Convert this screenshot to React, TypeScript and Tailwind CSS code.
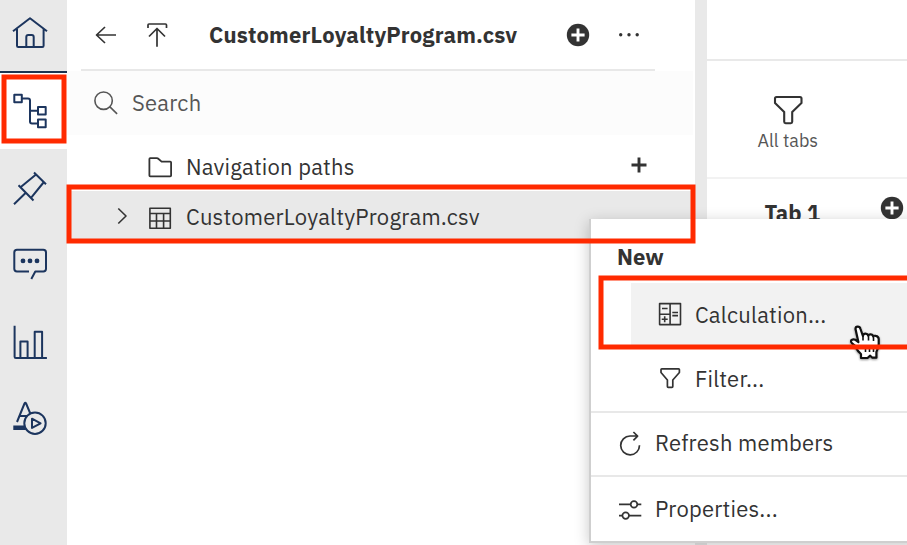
import type { ReactNode } from "react";

type IconProps = {
  box: string;
  w: number;
  h: number;
  stroke?: number;
  color?: string;
  className?: string;
  children: ReactNode;
};

function Icon({ box, w, h, stroke = 1.5, color = "#333333", className = "", children }: IconProps) {
  return (
    <svg
      viewBox={box}
      width={w}
      height={h}
      fill="none"
      stroke={color}
      strokeWidth={stroke}
      strokeLinejoin="round"
      className={`block shrink-0 ${className}`}
    >
      {children}
    </svg>
  );
}

const NAVY = "#1c355e";

function SideIcon({ top, children }: { top: number; children: ReactNode }) {
  return (
    <Icon box={`12 ${top} 36 36`} w={36} h={36} stroke={2} color={NAVY}>
      {children}
    </Icon>
  );
}

function Sidebar() {
  return (
    <nav className="flex w-[67px] shrink-0 flex-col bg-[#e9e9e9]">
      <div className="flex h-[73px] items-start border-b-2 border-[#1b3350] pt-[15px] pl-3">
        <SideIcon top={15}>
          <path d="M13 31.3 30 18.2 47 31.3M17 29v16.700q0 1.300 1.300 1.300h24q1.300 0 1.300-1.300V29M26.300 47V37q0-2 2-2h3.400q2 0 2 2v10" />
        </SideIcon>
      </div>
      <div className="flex h-[76px] items-center bg-white pl-3">
        <SideIcon top={93}>
          <path d="M14.300 94.700h7.500v7.600h-7.500zM38 107h7.700v7.600H38zM38 119.600h7.700v7.600H38zM22 98.400h6q2 0 2 2v21q0 2 2 2h6M30 110.800h8" />
        </SideIcon>
      </div>
      <div className="flex h-[77px] items-center pl-3">
        <SideIcon top={169.5}>
          <path d="m34 172 12 11.800M18.500 184.700l15 15.300M36 174l-15.500 12.800M43.500 182 31 197.300M25.800 192.300 14 203.800" />
        </SideIcon>
      </div>
      <div className="flex h-[77px] items-center pl-3">
        <SideIcon top={246.5}>
          <path d="M29 271H17q-2.700 0-2.700-2.700V252q0-2.700 2.700-2.700h26.300q2.700 0 2.700 2.700v16.300q0 2.700-2.700 2.700h-8l-4 7.500" />
          <g fill={NAVY} stroke="none">
            <circle cx="23" cy="260.400" r="2.400" />
            <circle cx="30" cy="260.400" r="2.400" />
            <circle cx="37" cy="260.400" r="2.400" />
          </g>
        </SideIcon>
      </div>
      <div className="flex h-[77px] items-center pl-3">
        <SideIcon top={323.5}>
          <path d="M14.600 325.300v31q0 1.300 1.300 1.300h31M20.400 357.300V341h7.200v16.300M34.700 357.300V331.300h7.400v26" />
        </SideIcon>
      </div>
      <div className="flex h-[77px] items-center pl-3">
        <SideIcon top={400.5}>
          <path d="m17 421.500 7.500-18.500q.8-1.500 1.600 0l4.200 10M20 415.500h7.500" />
          <path d="M13.300 425h11q.6 2.500 1.700 4.400H13.300z" fill={NAVY} stroke="none" />
          <circle cx="35" cy="422.700" r="10.700" />
          <path d="M32 418.200v9.200l8.600-4.600z" />
        </SideIcon>
      </div>
    </nav>
  );
}

function PlusCircle() {
  return (
    <svg viewBox="0 0 24 24" width={24} height={24} className="block shrink-0">
      <circle cx="12" cy="12" r="11.200" fill="#333333" />
      <path d="M12 5.400v13.200M5.400 12h13.200" stroke="#ffffff" strokeWidth="2.900" />
    </svg>
  );
}

function SourcesPanel() {
  return (
    <section className="flex w-[628px] shrink-0 flex-col bg-white text-[#333333]">
      <header className="ml-[14px] flex h-[71px] w-[574px] items-center border-b-2 border-[#e8e8e8] pl-[13px]">
        <Icon box="94 23 24 24" w={24} h={24} stroke={1.7}>
          <path d="M116 35H96.500M105 27l-8.500 8 8.500 8" />
        </Icon>
        <Icon box="145 23 24 24" w={24} h={24} stroke={1.7} className="ml-[27px]">
          <path d="M148 28v-3q0-1 1-1h16.500q1 0 1 1v3M157 46.800V28.500M149 36.500l8-8 8 8" />
        </Icon>
        <h1 className="ml-10 w-[308px] text-[22px] leading-7 font-bold tracking-[0.2px] whitespace-nowrap">
          CustomerLoyaltyProgram.csv
        </h1>
        <div className="ml-[49px]">
          <PlusCircle />
        </div>
        <Icon box="617 23 24 24" w={24} h={24} className="ml-[27px]">
          <g fill="#333333" stroke="none">
            <circle cx="620.700" cy="34.800" r="1.700" />
            <circle cx="629" cy="34.800" r="1.700" />
            <circle cx="637.200" cy="34.800" r="1.700" />
          </g>
        </Icon>
      </header>
      <div className="flex h-16 w-[626px] items-center bg-[#fcfcfc] pl-[26px] text-[#565656]">
        <Icon box="93 90 26 26" w={26} h={26} stroke={1.600} color="#565656">
          <circle cx="103.600" cy="100.700" r="8.700" />
          <path d="m109.900 106.900 7.200 7" />
        </Icon>
        <span className="ml-[13px] text-[22px] leading-7 tracking-[0.2px]">Search</span>
      </div>
      <div className="flex h-14 items-center pt-2 pl-20">
        <Icon box="147 155 26 26" w={26} h={26} stroke={1.800}>
          <path d="M149.400 160q0-.8.800-.8h6.600q1 0 1.800.8l3 2.600h8.600q.9 0 .9.900v13q0 .9-.9.900h-19.900q-.9 0-.9-.9z" />
        </Icon>
        <span className="ml-[13px] w-[445px] text-[22px] leading-7 tracking-[0.2px]">Navigation paths</span>
        <Icon box="631 161 16 16" w={16} h={16} stroke={2.900} className="-mt-1">
          <path d="M639 161.500v15M631.500 169h15" />
        </Icon>
      </div>
      <div className="flex h-[50px] items-center bg-[#e9e9e9] pb-px pl-[50px]">
        <Icon box="117 207 10 18" w={10} h={18} stroke={1.600}>
          <path d="m118.300 208.500 7.700 7.500-7.700 7.500" />
        </Icon>
        <Icon box="147 205 26 26" w={26} h={26} className="mt-1 ml-5" stroke={1.600}>
          <path d="M149.900 208.300h20.400v20H149.900zM149.900 213.500h20.400M149.900 221h20.400M156.500 213.500v14.800M163.600 213.500v14.800" />
        </Icon>
        <span className="ml-[13px] mt-0.5 text-[22px] leading-7 tracking-[0.22px]">CustomerLoyaltyProgram.csv</span>
      </div>
    </section>
  );
}

function TabsPane() {
  return (
    <section className="flex min-w-0 flex-1 flex-col bg-white text-[#333333]">
      <div className="h-[61px] border-b-2 border-[#e9e9e9]" />
      <div className="flex h-[118px] w-full flex-col border-b-2 border-[#f2f2f2] pt-8">
        <Icon box="772 93 32 32" w={32} h={32} stroke={2.100} className="ml-[65px]">
          <path d="M775 98.500q0-1.500 1.500-1.500h23.500q1.500 0 1.500 1.500v4.500l-9.300 9v9.800q0 1.400-1.400 1.400h-5.200q-1.400 0-1.400-1.400V112l-9.200-9z" />
        </Icon>
        <span className="mt-1 ml-[50.5px] text-[18px] leading-6 text-[#565656]">All tabs</span>
      </div>
      <div className="flex h-[66px] items-center pl-[57.5px]">
        <span className="mt-0.5 w-[115.5px] text-[22px] leading-7 font-bold">Tab 1</span>
        <div className="-mt-2">
          <PlusCircle />
        </div>
      </div>
    </section>
  );
}

function ContextMenu() {
  return (
    <div className="absolute top-[219px] left-[589px] flex h-[324px] w-[330px] flex-col border-b-2 border-l-2 border-[#cfcfcf] bg-white text-[22px] leading-7 tracking-[0.2px] text-[#333333] shadow-[0_3px_14px_rgba(0,0,0,0.22)]">
      <div className="flex h-16 items-center pt-3 pl-[26px] font-bold tracking-normal">New</div>
      <div className="ml-10 flex h-[62px] items-center bg-[#f2f2f2] pl-[26px]">
        <Icon box="657 301 26 26" w={26} h={26} stroke={1.600}>
          <path d="M659.600 303.600h20.900v21h-20.900zM670.100 303.600v21M659.600 314.200h10.500M662 308.500h5.600M661.700 319.200h6M664.700 316.200v6M672.300 312.500h5.700M672.300 315.600h5.700" />
        </Icon>
        <span className="mt-0.5 ml-3">Calculation...</span>
      </div>
      <div className="flex h-[68px] items-center border-b-2 border-[#e8e8e8] pl-[66px]">
        <Icon box="657 365 26 26" w={26} h={26} stroke={1.700}>
          <path d="M661 369.600q0-.8.800-.8h16.800q.8 0 .8.800v2.900l-6.600 7.500v6.500q0 .8-.8.800h-3.800q-.8 0-.8-.8V380l-6.400-7.500z" />
        </Icon>
        <span className="mt-0.5 ml-3">Filter...</span>
      </div>
      <div className="flex h-16 items-center border-b-2 border-[#e8e8e8] pl-[26px]">
        <Icon box="617 431 26 26" w={26} h={26} stroke={1.700}>
          <path d="M639.500 445.300a9.400 9.400 0 1 1-9.500-9.300h7M633.400 432l4.200 4.100-4.200 4.300" />
        </Icon>
        <span className="mb-0.5 ml-3">Refresh members</span>
      </div>
      <div className="flex flex-1 items-center pl-[26px]">
        <Icon box="617 496 26 26" w={26} h={26} stroke={1.700}>
          <path d="M619 504.400h11.700M637.300 504.400h4M619 515.600h3.300M629 515.600h12.300" />
          <circle cx="634" cy="504.400" r="3.300" />
          <circle cx="625.700" cy="515.600" r="3.300" />
        </Icon>
        <span className="ml-3">Properties...</span>
      </div>
    </div>
  );
}

function HandCursor() {
  return (
    <svg viewBox="846 322 36 40" width={36} height={40} className="absolute top-[322px] left-[846px] drop-shadow-[0_1px_1px_rgba(0,0,0,0.45)]">
      <path
        d="M855.500 329q0-2.300 2.200-2.300t2.800 2.300l2.400 7q.3-2.300 2.600-2.300 2 0 2.700 2 .6-1.500 2.600-1.300 2 .2 2.300 2 .8-1 2.700-.5 2.700.6 2.900 3v5q0 3-1.300 5.500l-1 2.500v5.800h-4l-2.200-2-2.700 2.300h-6.500v-4q-3.200-2.500-5-6.200-1.300-2.800-3.800-4.300-1.800-1.500-1.100-3 1.500-2 4.300-.7l3 2.200z"
        fill="#ffffff"
        stroke="#111111"
        strokeWidth="2.200"
        strokeLinejoin="round"
      />
      <path d="M863 335v5.500M868.500 336v4.500M873.500 337v4M865.500 346v6M869.500 346v6M873.500 346v6" stroke="#111111" strokeWidth="1.600" fill="none" />
    </svg>
  );
}

export default function App() {
  return (
    <div className="relative h-[545px] w-[907px] overflow-hidden bg-white font-['IBM_Plex_Sans',Roboto,'Liberation_Sans',sans-serif]">
      <div className="flex h-full">
        <Sidebar />
        <SourcesPanel />
        <div className="w-3 shrink-0 bg-[#e9e9e9]" />
        <TabsPane />
      </div>
      <ContextMenu />
      <HandCursor />
      <div className="absolute top-[74px] left-px h-[69px] w-[65px] translate-x-[0.5px] translate-y-[0.5px] border-5 border-[#ff2a00]" />
      <div className="absolute top-[184px] left-[66px] h-[59px] w-[629px] translate-x-[0.5px] translate-y-[0.5px] border-5 border-[#ff2a00]" />
      <div className="absolute top-[275px] left-[598px] h-[74px] w-[320px] translate-x-[0.5px] translate-y-[0.5px] border-5 border-[#ff2a00]" />
    </div>
  );
}
